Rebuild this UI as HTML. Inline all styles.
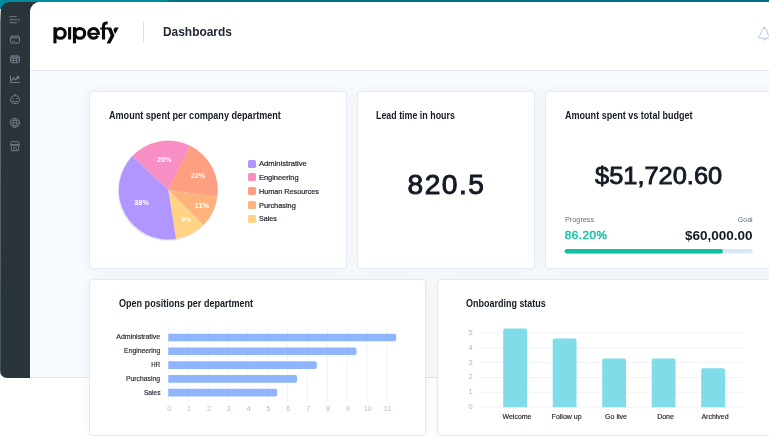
<!DOCTYPE html>
<html><head><meta charset="utf-8">
<style>
*{box-sizing:border-box;margin:0;padding:0}
html,body{width:769px;height:436px;overflow:hidden;background:#fff;font-family:"Liberation Sans",sans-serif;}
#teal{position:absolute;left:0;top:0;width:769px;height:14px;background:linear-gradient(90deg,#008a9d 0,#008a9d 167px,#007083 168px,#006e82 100%);}
#side{position:absolute;left:0;top:2px;width:41px;height:376px;background:#29343b;border-radius:10px 0 0 7px;}
#sidefade{position:absolute;left:0;top:9px;width:1px;height:364px;background:linear-gradient(180deg,rgba(255,255,255,0.85) 0,rgba(255,255,255,0.7) 3px,rgba(255,255,255,0.3) 12px,rgba(255,255,255,0.15) 100%);}
#main{position:absolute;left:30px;top:2px;width:739px;height:376px;background:#f8fbfe;border-radius:10px 0 0 0;overflow:hidden;border-bottom:1px solid #d6e5f3;}
#hdr{position:absolute;left:0;top:0;width:739px;height:69px;background:#fff;border-bottom:1px solid #dfe8f3;}
.card{position:absolute;background:#fff;border:1px solid #e2e8f4;border-radius:4px;box-shadow:0 0 12px rgba(50,60,85,0.065);}
.t{position:absolute;font-size:10px;line-height:12px;color:#161c26;font-weight:bold;white-space:nowrap;transform-origin:0 50%;}
.x{position:absolute;white-space:nowrap;}
.lg{position:absolute;left:247.7px;margin-top:0.2px;width:8px;height:8px;border-radius:1.5px;}
.lt{position:absolute;left:259.2px;font-size:7.5px;line-height:10px;color:#20262e;white-space:nowrap;-webkit-text-stroke:0.2px #20262e;transform-origin:0 50%;margin-top:0.5px}
.pl{margin-top:0.3px;position:absolute;font-size:7.3px;line-height:10px;font-weight:bold;color:#fff;width:30px;text-align:center;}
.hb{position:absolute;left:168.5px;height:7.6px;background:#8fb5ff;border-radius:0 2px 2px 0;}
.hl{position:absolute;right:608.8px;font-size:7px;line-height:10px;color:#20262e;white-space:nowrap;-webkit-text-stroke:0.15px #20262e;}
.ax{margin-left:0.7px;position:absolute;font-size:7.2px;line-height:10px;color:#a9bdd3;width:20px;text-align:center;}
.vb{position:absolute;width:24px;background:#80dce9;border-radius:2px 2px 0 0;}
.vl{position:absolute;font-size:7px;line-height:10px;color:#20262e;width:50px;text-align:center;white-space:nowrap;-webkit-text-stroke:0.15px #20262e;}
.ay{position:absolute;left:452.7px;width:20px;text-align:right;font-size:8px;margin-top:0.2px;line-height:10px;color:#a9bdd3;}
#wrap{position:absolute;left:0;top:0;width:769px;height:436px;overflow:hidden;will-change:transform;}
</style></head><body><div id="wrap">
<div id="teal"></div>
<div id="side"></div><div id="sidefade"></div>
<div id="main"><div id="hdr"></div></div>

<!-- sidebar icons -->
<svg style="position:absolute;left:0;top:0" width="30" height="160" viewBox="0 0 30 160" fill="none" stroke="#6f7c85" stroke-width="1" stroke-linecap="round" stroke-linejoin="round">
 <path d="M9.9 16.7H16.4M9.9 19.7H16.4M9.9 22.7H16.4"/>
 <path d="M18.5 19L19.5 19.7L18.5 20.4Z" fill="#6f7c85" stroke-width="0.7"/>
 <rect x="10.5" y="36.2" width="9" height="7" rx="1.5"/>
 <path d="M10.7 37.9H19.3"/><path d="M12.6 41.4H14.4" stroke-width="0.9"/>
 <rect x="10.5" y="55.9" width="9" height="6.8" rx="1.5"/><path d="M11 56.4H19V58H11Z" fill="#6f7c85" stroke="none" opacity="0.55"/>
 <path d="M10.5 58.2H19.5M10.5 60.4H19.5M13.5 56.2V62.5M16.5 56.2V62.5" stroke-width="0.9"/>
 <path d="M10.5 75.9V82.5H19.5"/>
 <path d="M11.9 80.4L13.6 77.8L15.6 79.9L18.5 77.1M17 76.9H18.7V78.5" stroke-width="1.1" stroke="#7a8790"/>
 <path d="M15 94.2V95.4"/>
 <path d="M10.5 100.2C10.5 97 12.2 95.7 15 95.7C17.8 95.7 19.5 97 19.5 100.2C19.5 101 19 101.5 18.6 101.7C18.4 103 17.6 103.5 16.6 103.5H13.4C12.4 103.5 11.6 103 11.4 101.7C11 101.5 10.5 101 10.5 100.2Z"/>
 <path d="M11.6 101.6H18.4M12.6 98.8H13.6M16.4 98.8H17.4" stroke-width="0.9"/>
 <circle cx="15" cy="122.8" r="4.6"/>
 <path d="M10.4 122.8H19.6M15 118.2C12.7 120.5 12.7 125.1 15 127.4C17.3 125.1 17.3 120.5 15 118.2M11.3 120.4H18.7M11.3 125.2H18.7" stroke-width="0.85"/>
 <path d="M11.7 141.7H18.3L19.5 144.6H10.5ZM10.5 144.6C10.5 146.3 12.7 146.3 12.7 144.6C12.7 146.3 15 146.3 15 144.6C15 146.3 17.3 146.3 17.3 144.6C17.3 146.3 19.5 146.3 19.5 144.6" stroke-width="0.95"/>
 <path d="M11.3 146.2V150.7H18.7V146.2M13.6 150.7V148.5C13.6 147.2 16.4 147.2 16.4 148.5V150.7" stroke-width="0.95"/>
</svg>

<!-- logo -->
<svg style="position:absolute;left:48px;top:16px" width="76" height="34" viewBox="48 16 76 34">
 <g fill="none" stroke="#0b0b0d" stroke-width="3.1">
  <circle cx="60.35" cy="33.4" r="4.85"/>
  <circle cx="79.85" cy="33.4" r="4.85"/>
  <path d="M97.75 35.82A4.85 4.85 0 1 1 98.40 33.23"/>
  <path d="M99.85 33.85H89.5" stroke-width="2.1"/>
  <path d="M103.5 39.4V26.2C103.5 23.8 105 22.7 107.6 23"/>
  <path d="M100.2 28.5H108" stroke-width="2"/>
 </g>
 <g fill="#0b0b0d">
  <rect x="53.4" y="27.15" width="3.1" height="16.2"/>
  <rect x="68.1" y="27.15" width="3.05" height="12.35"/>
  <rect x="72.9" y="27.15" width="3.1" height="16.2"/>
  <path d="M107.2 27.4H111.1L114.5 35.4L110.3 43.4H106.6L110.6 35.44Z"/>
  <path d="M114.8 27.4H118.7L115.15 34.17L113.4 30.05Z"/>
 </g>
</svg>

<div style="position:absolute;left:143px;top:22px;width:1px;height:20px;background:#d5e1ef"></div>
<div class="x" style="left:162.7px;top:23.5px;font-size:13px;line-height:16px;color:#202834;font-weight:bold;transform-origin:0 50%;transform:scaleX(0.917)">Dashboards</div>

<!-- bell -->
<svg style="position:absolute;left:752px;top:22px" width="17" height="22" viewBox="752 22 17 22" fill="none" stroke="#a8c5e2" stroke-width="1" stroke-linecap="round" stroke-linejoin="round">
 <path d="M764.3 26.9V28.2M764.3 28.2C762.6 28.2 761.8 29.8 761.4 31.6C761 33.6 760.2 35 758.8 36.6C758.2 37.4 758.6 38.2 759.6 38.2H769M764.3 28.2C766 28.2 766.8 29.8 767.2 31.6C767.6 33.6 768.2 35 769 36M763.2 39.4C763.8 40.2 764.8 40.2 765.4 39.4"/>
</svg>

<!-- cards -->
<div class="card" style="left:89px;top:91px;width:258px;height:178px"></div>
<div class="card" style="left:357px;top:91px;width:178px;height:178px"></div>
<div class="card" style="left:545px;top:91px;width:240px;height:178px"></div>
<div class="card" style="left:89px;top:279px;width:337px;height:157px"></div>
<div class="card" style="left:437px;top:279px;width:350px;height:157px"></div>

<div class="t" style="left:109.3px;top:110px;transform:scaleX(0.907)">Amount spent per company department</div>
<div class="t" style="left:376.2px;top:110px;transform:scaleX(0.887)">Lead time in hours</div>
<div class="t" style="left:564.8px;top:110px;transform:scaleX(0.904)">Amount spent vs total budget</div>
<div class="t" style="left:119px;top:298px;transform:scaleX(0.904)">Open positions per department</div>
<div class="t" style="left:465.5px;top:298px;transform:scaleX(0.898)">Onboarding status</div>

<!-- pie -->
<svg style="position:absolute;left:110px;top:132px" width="120" height="116" viewBox="110 131.5 120 116">
 <circle cx="167.6" cy="190.6" r="50" fill="#e9edf7"/>
 <path d="M168.3 189.6L132.10 155.84A49.5 49.5 0 0 1 190.00 145.11Z" fill="#f88fc4"/>
 <path d="M168.3 189.6L190.00 145.11A49.5 49.5 0 0 1 217.37 196.15Z" fill="#ff9f82"/>
 <path d="M168.3 189.6L217.37 196.15A49.5 49.5 0 0 1 203.30 224.60Z" fill="#ffb27c"/>
 <path d="M168.3 189.6L203.30 224.60A49.5 49.5 0 0 1 176.04 238.49Z" fill="#ffd284"/>
 <path d="M168.3 189.6L176.04 238.49A49.5 49.5 0 0 1 132.10 155.84Z" fill="#b296ff"/>
</svg>
<div class="pl" style="left:149.2px;top:154.5px">20%</div>
<div class="pl" style="left:183px;top:170.7px">22%</div>
<div class="pl" style="left:186.9px;top:200.6px">11%</div>
<div class="pl" style="left:171.3px;top:214.9px">9%</div>
<div class="pl" style="left:126.6px;top:197.4px">38%</div>

<div class="lg" style="top:159.4px;background:#b296ff"></div><div class="lt" style="top:158.6px;transform:scaleX(1.015)">Administrative</div>
<div class="lg" style="top:173.2px;background:#f88fc4"></div><div class="lt" style="top:172.4px;transform:scaleX(0.99)">Engineering</div>
<div class="lg" style="top:187px;background:#ff9f82"></div><div class="lt" style="top:186.2px;transform:scaleX(0.965)">Human Resources</div>
<div class="lg" style="top:200.8px;background:#ffb27c"></div><div class="lt" style="top:200px;transform:scaleX(0.98)">Purchasing</div>
<div class="lg" style="top:214.6px;background:#ffd284"></div><div class="lt" style="top:213.8px;transform:scaleX(0.95)">Sales</div>

<!-- 820.5 -->
<div class="x" style="left:407.5px;top:167.2px;font-size:28.2px;line-height:34px;color:#141a24;letter-spacing:1.45px;-webkit-text-stroke:0.95px #141a24">820.5</div>
<!-- $51,720.60 -->
<div class="x" style="left:595px;top:162px;font-size:23px;line-height:28px;color:#141a24;-webkit-text-stroke:0.8px #141a24;transform-origin:0 50%;transform:scaleX(1.105)">$51,720.60</div>

<div class="x" style="left:564.7px;top:214.6px;font-size:7px;line-height:10px;color:#5e6e80;transform-origin:0 50%;transform:scaleX(1.04)">Progress</div>
<div class="x" style="right:16.4px;top:214.6px;font-size:7px;line-height:10px;color:#5e6e80">Goal</div>
<div class="x" style="left:564.8px;top:226.9px;font-size:11.7px;line-height:16px;color:#16bfa5;-webkit-text-stroke:0.5px #16bfa5;letter-spacing:0.5px;">86.20%</div>
<div class="x" style="right:16.4px;top:227.5px;font-size:13.5px;line-height:16px;color:#141a24;font-weight:bold;">$60,000.00</div>
<svg style="position:absolute;left:560px;top:245px" width="200" height="12" viewBox="560 245 200 12">
 <rect x="564.7" y="249.1" width="188" height="4.4" rx="2.2" fill="#dbe7f5"/>
 <rect x="564.7" y="249.1" width="158.2" height="4.4" rx="2.2" fill="#0fbfa4"/>
</svg>

<!-- hbar chart -->
<svg style="position:absolute;left:160px;top:325px" width="240" height="80" viewBox="160 325 240 80" stroke="#eef2f9" stroke-width="1">
 <path d="M168.5 328V401.5M188.35 328V401.5M208.2 328V401.5M228.05 328V401.5M247.9 328V401.5M267.75 328V401.5M287.6 328V401.5M307.45 328V401.5M327.3 328V401.5M347.15 328V401.5M367 328V401.5M386.85 328V401.5"/>
</svg>
<svg style="position:absolute;left:160px;top:325px" width="240" height="80" viewBox="160 325 240 80" fill="#8fb5ff"><path d="M168.3 333.75H394.20A2 2 0 0 1 396.20 335.75V339.35A2 2 0 0 1 394.20 341.35H168.3Z"/><path d="M168.3 347.50H354.50A2 2 0 0 1 356.50 349.50V353.10A2 2 0 0 1 354.50 355.10H168.3Z"/><path d="M168.3 361.30H314.80A2 2 0 0 1 316.80 363.30V366.90A2 2 0 0 1 314.80 368.90H168.3Z"/><path d="M168.3 375.05H295.10A2 2 0 0 1 297.10 377.05V380.65A2 2 0 0 1 295.10 382.65H168.3Z"/><path d="M168.3 388.80H275.20A2 2 0 0 1 277.20 390.80V394.40A2 2 0 0 1 275.20 396.40H168.3Z"/></svg>
<div class="hl" style="top:332.4px">Administrative</div>
<div class="hl" style="top:346.2px;transform:scaleX(0.97);transform-origin:100% 50%">Engineering</div>
<div class="hl" style="top:359.9px;transform:scaleX(0.87);transform-origin:100% 50%">HR</div>
<div class="hl" style="top:373.7px;transform:scaleX(0.97);transform-origin:100% 50%">Purchasing</div>
<div class="hl" style="top:387.5px;transform:scaleX(0.95);transform-origin:100% 50%">Sales</div>
<div class="ax" style="left:158.5px;top:403.9px">0</div>
<div class="ax" style="left:178.35px;top:403.9px">1</div>
<div class="ax" style="left:198.2px;top:403.9px">2</div>
<div class="ax" style="left:218.05px;top:403.9px">3</div>
<div class="ax" style="left:237.9px;top:403.9px">4</div>
<div class="ax" style="left:257.75px;top:403.9px">5</div>
<div class="ax" style="left:277.6px;top:403.9px">6</div>
<div class="ax" style="left:297.45px;top:403.9px">7</div>
<div class="ax" style="left:317.3px;top:403.9px">8</div>
<div class="ax" style="left:337.15px;top:403.9px">9</div>
<div class="ax" style="left:357px;top:403.9px">10</div>
<div class="ax" style="left:376.85px;top:403.9px">11</div>

<!-- column chart -->
<svg style="position:absolute;left:475px;top:325px" width="275" height="90" viewBox="475 325 275 90" stroke="#eef2f9" stroke-width="1">
 <path d="M479.7 332.9H742.8M479.7 347.75H742.8M479.7 362.6H742.8M479.7 377.4H742.8M479.7 392.25H742.8M479.7 407.1H742.8"/>
</svg>
<svg style="position:absolute;left:475px;top:325px" width="275" height="90" viewBox="475 325 275 90" fill="#80dce9"><path d="M503.20 407.3V330.40A2 2 0 0 1 505.20 328.40H525.00A2 2 0 0 1 527.00 330.40V407.3Z"/><path d="M552.70 407.3V340.50A2 2 0 0 1 554.70 338.50H574.50A2 2 0 0 1 576.50 340.50V407.3Z"/><path d="M602.20 407.3V360.40A2 2 0 0 1 604.20 358.40H624.00A2 2 0 0 1 626.00 360.40V407.3Z"/><path d="M651.70 407.3V360.40A2 2 0 0 1 653.70 358.40H673.50A2 2 0 0 1 675.50 360.40V407.3Z"/><path d="M701.20 407.3V370.30A2 2 0 0 1 703.20 368.30H723.00A2 2 0 0 1 725.00 370.30V407.3Z"/></svg>
<div class="vl" style="left:492px;top:412.1px">Welcome</div>
<div class="vl" style="left:541.6px;top:412.1px">Follow up</div>
<div class="vl" style="left:591px;top:412.1px">Go live</div>
<div class="vl" style="left:640.5px;top:412.1px">Done</div>
<div class="vl" style="left:690px;top:412.1px">Archived</div>
<div class="ay" style="top:327.7px">5</div>
<div class="ay" style="top:342.6px">4</div>
<div class="ay" style="top:357.4px">3</div>
<div class="ay" style="top:372.2px">2</div>
<div class="ay" style="top:387.1px">1</div>
<div class="ay" style="top:401.9px">0</div>
</div></body></html>
